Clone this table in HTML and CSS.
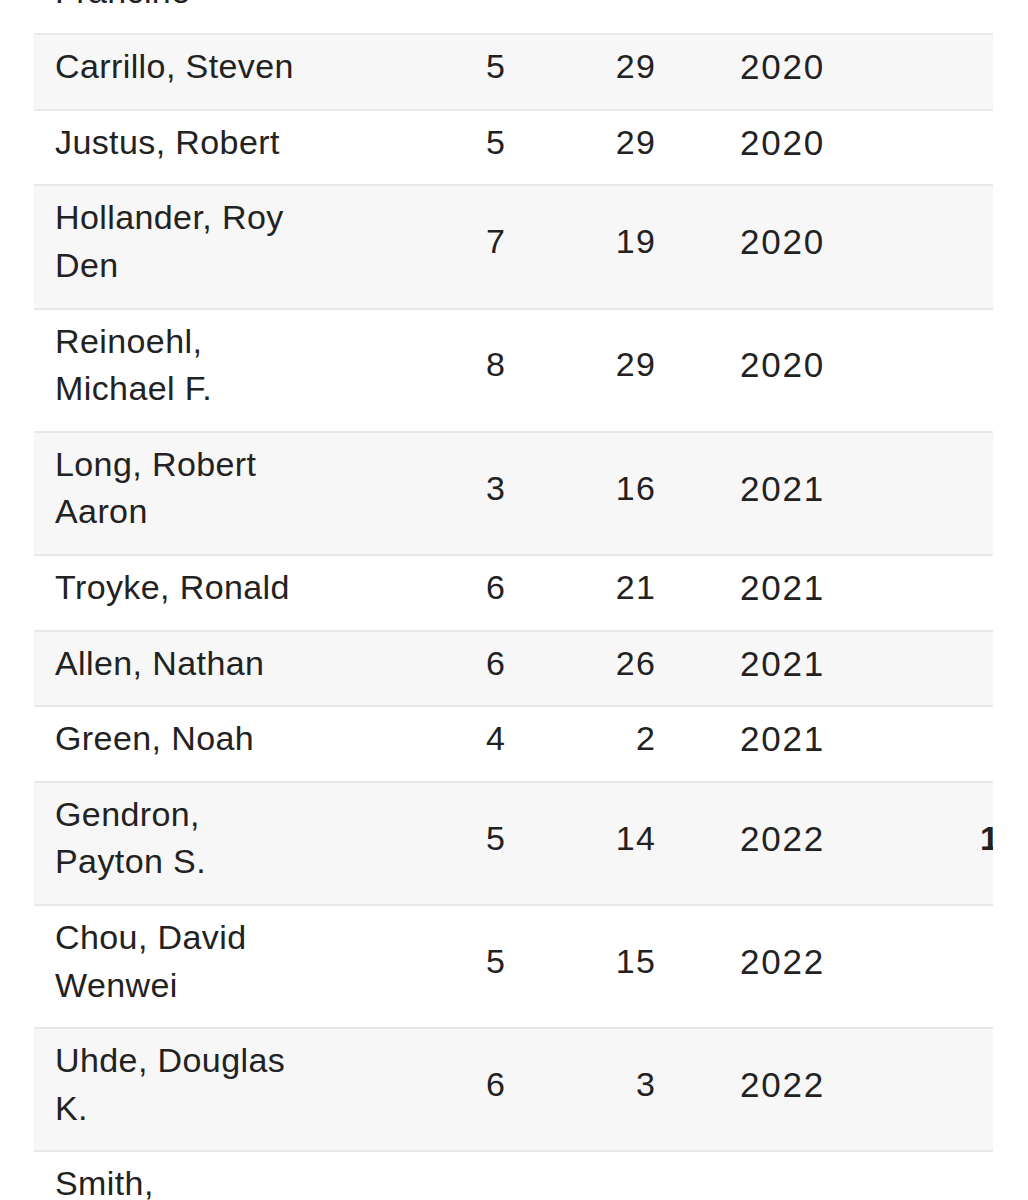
FILE: index.html
```html
<!DOCTYPE html>
<html>
<head>
<meta charset="utf-8">
<link rel="stylesheet" href="styles.css">
</head>
<body>
<div class="clip">
<table class="roster">
<colgroup>
<col class="c-name"><col class="c-a"><col class="c-b"><col class="c-yr"><col class="c-x">
</colgroup>
<tbody>
<tr><td class="name">Gonzales, Francine</td><td class="num">4</td><td class="num">11</td><td class="yr">2020</td><td class="extra"></td></tr>
<tr><td class="name">Carrillo, Steven</td><td class="num">5</td><td class="num">29</td><td class="yr">2020</td><td class="extra"></td></tr>
<tr><td class="name">Justus, Robert</td><td class="num">5</td><td class="num">29</td><td class="yr">2020</td><td class="extra"></td></tr>
<tr><td class="name">Hollander, Roy Den</td><td class="num">7</td><td class="num">19</td><td class="yr">2020</td><td class="extra"></td></tr>
<tr><td class="name">Reinoehl, Michael F.</td><td class="num">8</td><td class="num">29</td><td class="yr">2020</td><td class="extra"></td></tr>
<tr><td class="name">Long, Robert Aaron</td><td class="num">3</td><td class="num">16</td><td class="yr">2021</td><td class="extra"></td></tr>
<tr><td class="name">Troyke, Ronald</td><td class="num">6</td><td class="num">21</td><td class="yr">2021</td><td class="extra"></td></tr>
<tr><td class="name">Allen, Nathan</td><td class="num">6</td><td class="num">26</td><td class="yr">2021</td><td class="extra"></td></tr>
<tr><td class="name">Green, Noah</td><td class="num">4</td><td class="num">2</td><td class="yr">2021</td><td class="extra"></td></tr>
<tr><td class="name">Gendron, Payton S.</td><td class="num">5</td><td class="num">14</td><td class="yr">2022</td><td class="extra"><b>10</b></td></tr>
<tr><td class="name">Chou, David Wenwei</td><td class="num">5</td><td class="num">15</td><td class="yr">2022</td><td class="extra"></td></tr>
<tr><td class="name">Uhde, Douglas K.</td><td class="num">6</td><td class="num">3</td><td class="yr">2022</td><td class="extra"></td></tr>
<tr><td class="name">Smith, Christopher Alan</td><td class="num">7</td><td class="num">8</td><td class="yr">2022</td><td class="extra"></td></tr>
</tbody>
</table>
</div>
</body>
</html>
```
FILE: styles.css
```css
html, body {
  margin: 0;
  padding: 0;
  background: #ffffff;
}
body {
  font-family: "Liberation Sans", Arial, sans-serif;
  color: #222222;
  overflow: hidden;
}
.clip {
  margin-left: 34px;
  width: 959px;
  overflow: hidden;
  margin-top: -90px;
}
.roster {
  border-collapse: collapse;
  table-layout: fixed;
  width: 1100px;
  font-size: 34px;
  letter-spacing: 0.4px;
}
.c-name { width: 280px; }
.c-a { width: 210px; }
.c-b { width: 150px; }
.c-yr { width: 170px; }
.c-x { width: 290px; }
.roster td {
  border-top: 2px solid #e8e8e8;
  padding: 8px 19px 18px 0;
  line-height: 47.6px;
  vertical-align: middle;
}
.roster tr:nth-child(even) td {
  background: #f7f7f7;
}
.roster td.name {
  padding-left: 21px;
  padding-right: 9px;
  text-align: left;
}
.roster td.num {
  text-align: right;
  letter-spacing: 1.5px;
  padding-right: 17.5px;
}
.roster td.yr {
  text-align: left;
  padding-left: 66px;
  padding-right: 0;
  letter-spacing: 1.8px;
  font-size: 35px;
}
.roster td.extra {
  text-align: left;
  padding-left: 136px;
  font-weight: 700;
}
```
